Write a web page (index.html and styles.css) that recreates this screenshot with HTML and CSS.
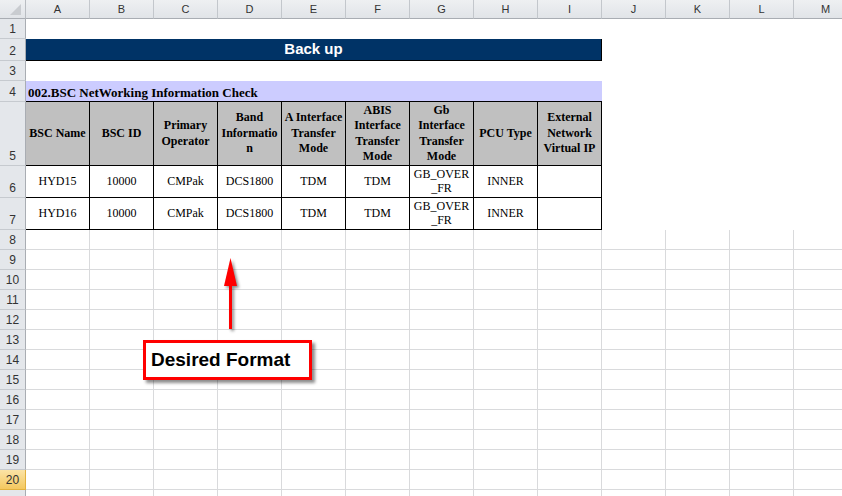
FILE: index.html
```html
<!DOCTYPE html>
<html lang="en">
<head>
	<meta charset="UTF-8">
	<title>Back up</title>
	<link rel="stylesheet" href="styles.css">
</head>
<body>
	<div class="sheet">
		<div class="rows" id="rows">
			<div class="row row-head">
				<div class="corner"><span class="corner-mark"></span></div>
				<div class="ch">A</div>
				<div class="ch">B</div>
				<div class="ch">C</div>
				<div class="ch">D</div>
				<div class="ch">E</div>
				<div class="ch">F</div>
				<div class="ch">G</div>
				<div class="ch">H</div>
				<div class="ch">I</div>
				<div class="ch">J</div>
				<div class="ch">K</div>
				<div class="ch">L</div>
				<div class="ch">M</div>
			</div>

			<div class="row">
				<div class="rh">1</div>
				<div class="fill span-all"></div>
			</div>

			<div class="row row-2">
				<div class="rh">2</div>
				<div class="banner">Back up</div>
				<div class="fill span-rest"></div>
			</div>

			<div class="row">
				<div class="rh">3</div>
				<div class="fill span-all"></div>
			</div>

			<div class="row row-4">
				<div class="rh">4</div>
				<div class="title">002.BSC NetWorking Information Check</div>
				<div class="fill span-rest"></div>
			</div>

			<div class="row row-5">
				<div class="rh">5</div>
				<div class="th">BSC Name</div>
				<div class="th">BSC ID</div>
				<div class="th">Primary Operator</div>
				<div class="th">Band Information</div>
				<div class="th">A Interface Transfer Mode</div>
				<div class="th">ABIS Interface Transfer Mode</div>
				<div class="th">Gb Interface Transfer Mode</div>
				<div class="th">PCU Type</div>
				<div class="th">External Network Virtual IP</div>
				<div class="fill span-rest"></div>
			</div>

			<div class="row row-data">
				<div class="rh">6</div>
				<div class="td">HYD15</div>
				<div class="td">10000</div>
				<div class="td">CMPak</div>
				<div class="td">DCS1800</div>
				<div class="td">TDM</div>
				<div class="td">TDM</div>
				<div class="td">GB_OVER_FR</div>
				<div class="td">INNER</div>
				<div class="td"></div>
				<div class="fill span-rest"></div>
			</div>

			<div class="row row-data">
				<div class="rh">7</div>
				<div class="td">HYD16</div>
				<div class="td">10000</div>
				<div class="td">CMPak</div>
				<div class="td">DCS1800</div>
				<div class="td">TDM</div>
				<div class="td">TDM</div>
				<div class="td">GB_OVER_FR</div>
				<div class="td">INNER</div>
				<div class="td"></div>
				<div class="fill span-rest"></div>
			</div>
		</div>

		<svg class="arrow" width="24" height="80" viewBox="0 0 24 80">
			<rect x="9" y="30" width="3" height="45" fill="#ff0000"/>
			<polygon points="10.5,4 4,32 17,32" fill="#ff0000"/>
		</svg>

		<div class="callout">Desired Format</div>
	</div>

<script>
	const rows = document.getElementById("rows");

	// empty rows 8 - 21 with normal gridlines (21 is cut off by the window)
	for (let r = 8; r <= 21; r++) {
		const row = document.createElement("div");
		row.className = "row";

		const head = document.createElement("div");
		head.className = r === 20 ? "rh selected" : "rh";
		head.textContent = r < 21 ? r : "";
		row.appendChild(head);

		for (let c = 0; c < 13; c++) {
			const cell = document.createElement("div");
			cell.className = "cell";
			row.appendChild(cell);
		}
		rows.appendChild(row);
	}
</script>
</body>
</html>
```

FILE: styles.css
```css
body {
	margin: 0;
	padding: 0;
	background-color: #fff;
	overflow: hidden;
	font-family: "Liberation Sans", Arial, sans-serif;
}

.sheet {
	position: relative;
	width: 858px;
	height: 496px;
	overflow: hidden;
}

.row {
	display: grid;
	grid-template-columns: 26px repeat(13, 64px);
	height: 20px;
}

.row > div {
	box-sizing: border-box;
}

.row-head {
	height: 19px;
}

.row-2 {
	height: 22px;
}

.row-4 {
	height: 21px;
}

.row-5 {
	height: 64px;
}

.row-data {
	height: 32px;
}

/* headers */
.corner {
	display: flex;
	justify-content: flex-end;
	align-items: flex-end;
	background: linear-gradient(#eef0f2, #e1e4e8);
	border-right: 1px solid #b9bdc2;
	border-bottom: 1px solid #a9adb3;
}

.corner-mark {
	width: 0;
	height: 0;
	border-left: 11px solid transparent;
	border-bottom: 11px solid #c9ccd0;
	margin: 0 4px 3px 0;
}

.ch {
	display: flex;
	justify-content: center;
	align-items: center;
	background: linear-gradient(#eef0f2, #e1e4e8);
	border-right: 1px solid #c3c7cc;
	border-bottom: 1px solid #a9adb3;
	font-size: 11px;
	color: #333;
}

.rh {
	display: flex;
	justify-content: center;
	align-items: flex-end;
	padding-bottom: 2px;
	background-color: #e4e7eb;
	border-right: 1px solid #a9adb3;
	border-bottom: 1px solid #c6cacf;
	font-size: 12px;
	line-height: 14px;
	color: #333;
}

.rh.selected {
	background: linear-gradient(#fbe3a6, #f4c85f);
	border-bottom-color: #e2b13f;
	border-right-color: #e2b13f;
}

/* cells */
.cell {
	border-right: 1px solid #d9dadc;
	border-bottom: 1px solid #d9dadc;
}

.fill {
	background-color: #fff;
}

.span-all {
	grid-column: span 13;
}

.span-rest {
	grid-column: span 4;
}

.banner {
	grid-column: span 9;
	display: flex;
	justify-content: center;
	align-items: center;
	padding-bottom: 2px;
	background-color: #003366;
	border-right: 1px solid #000;
	border-bottom: 1px solid #000;
	color: #fff;
	font-weight: bold;
	font-size: 15px;
}

.title {
	grid-column: span 9;
	display: flex;
	align-items: flex-end;
	padding: 0 0 1px 2px;
	background-color: #ccccff;
	border-bottom: 1px solid #000;
	font-family: "Liberation Serif", "Times New Roman", serif;
	font-weight: bold;
	font-size: 13px;
	line-height: 15px;
}

.th,
.td {
	display: flex;
	justify-content: center;
	align-items: center;
	text-align: center;
	padding: 0 1px;
	border-right: 1px solid #000;
	border-bottom: 1px solid #000;
	font-family: "Liberation Serif", "Times New Roman", serif;
	font-size: 12px;
	overflow-wrap: anywhere;
	color: #000;
}

.th {
	background-color: #c0c0c0;
	font-weight: bold;
	line-height: 15.5px;
}

.td {
	background-color: #fff;
	line-height: 13.5px;
}

/* annotation */
.arrow {
	position: absolute;
	left: 220px;
	top: 254px;
	filter: drop-shadow(2px 2px 1.5px rgba(0, 0, 0, 0.45));
}

.callout {
	position: absolute;
	left: 143px;
	top: 340px;
	width: 169px;
	height: 40px;
	box-sizing: border-box;
	padding-left: 5px;
	border: 3px solid #ff0000;
	background-color: #fff;
	box-shadow: 3px 3px 3px rgba(0, 0, 0, 0.45);
	font-weight: bold;
	font-size: 19px;
	line-height: 34px;
	color: #000;
}
```
